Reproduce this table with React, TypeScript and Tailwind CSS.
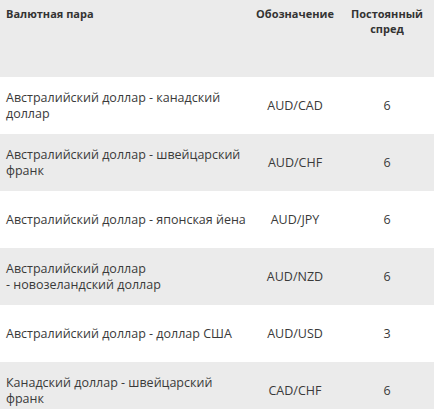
import React from "react";

const rows: { name: string[]; code: string; spread: string }[] = [
  { name: ["Австралийский доллар - канадский", "доллар"], code: "AUD/CAD", spread: "6" },
  { name: ["Австралийский доллар - швейцарский", "франк"], code: "AUD/CHF", spread: "6" },
  { name: ["Австралийский доллар - японская йена"], code: "AUD/JPY", spread: "6" },
  { name: ["Австралийский доллар", "- новозеландский доллар"], code: "AUD/NZD", spread: "6" },
  { name: ["Австралийский доллар - доллар США"], code: "AUD/USD", spread: "3" },
  { name: ["Канадский доллар - швейцарский", "франк"], code: "CAD/CHF", spread: "6" },
];

export default function App() {
  return (
    <div
      className="w-[434px] h-[409px] overflow-hidden bg-white text-[#3a3a3a]"
      style={{ fontFamily: '"Open Sans", "Noto Sans", sans-serif' }}
    >
      <div className="grid grid-cols-[250px_90px_94px] h-[77px] bg-[#ebebeb] text-[11px] font-bold leading-[15px] text-[#333]">
        <div className="pl-[6px] pt-[6px]">Валютная пара</div>
        <div className="pt-[6px] text-center">Обозначение</div>
        <div className="pt-[6px] text-center">Постоянный<br />спред</div>
      </div>
      {rows.map((r, i) => (
        <div
          key={i}
          className={
            i % 2 === 0
              ? "grid grid-cols-[250px_90px_94px] h-[57px] items-center bg-white text-[12.5px] leading-[16px]"
              : "grid grid-cols-[250px_90px_94px] h-[57px] items-center bg-[#ebebeb] text-[12.5px] leading-[16px]"
          }
        >
          <div className="pl-[6px] whitespace-nowrap">
            {r.name.map((l, j) => (
              <div key={j}>{l}</div>
            ))}
          </div>
          <div className="text-center">{r.code}</div>
          <div className="text-center">{r.spread}</div>
        </div>
      ))}
    </div>
  );
}
